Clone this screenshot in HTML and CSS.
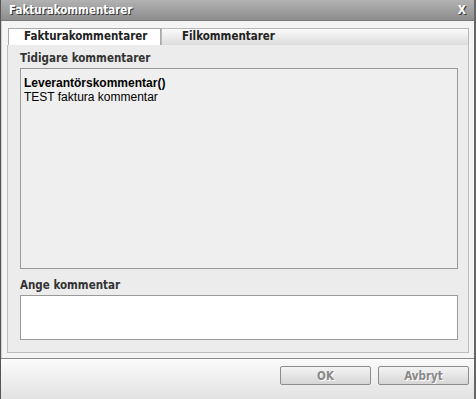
FILE: index.html
```html
<!DOCTYPE html>
<html lang="sv">
<head>
    <meta charset="UTF-8">
    <title>Fakturakommentarer</title>
    <link rel="stylesheet" href="styles.css">
</head>
<body>
    <div class="dialog">
        <div class="titlebar">
            <span class="title">Fakturakommentarer</span>
            <span class="close">X</span>
        </div>
        <div class="content">
            <div class="tabs">
                <div class="tab active">Fakturakommentarer</div>
                <div class="tab">Filkommentarer</div>
            </div>
            <div class="panel">
                <div class="label">Tidigare kommentarer</div>
                <div class="history">
                    <div class="author">Leverantörskommentar()</div>
                    <div class="text">TEST faktura kommentar</div>
                </div>
                <div class="label">Ange kommentar</div>
                <textarea class="input"></textarea>
            </div>
        </div>
        <div class="footer">
            <button class="btn">OK</button>
            <button class="btn">Avbryt</button>
        </div>
    </div>
</body>
</html>
```

FILE: styles.css
```css
* {
    margin: 0;
    padding: 0;
    box-sizing: border-box;
}

body {
    width: 476px;
    height: 399px;
    overflow: hidden;
    background-color: #f2f2f2;
    font-family: "DejaVu Sans Condensed", "DejaVu Sans", Verdana, sans-serif;
}

.dialog {
    width: 476px;
    height: 399px;
    display: flex;
    flex-direction: column;
    border-left: 1px solid #555;
    border-right: 2px solid #666;
}

.titlebar {
    height: 21px;
    background: linear-gradient(#b2b2b2, #8d8d8d);
    border-bottom: 1px solid #7a7a7a;
    display: flex;
    justify-content: space-between;
    align-items: center;
    padding: 0 8px 0 8px;
    color: #fff;
    font-weight: bold;
    font-size: 11.5px;
    text-shadow: 1px 1px 0 #333;
}

.close {
    font-size: 12px;
}

.content {
    background-color: #f4f4f4;
    padding: 7px 5px 5px 5px;
    border-left: 1px solid #cfcfcf;
}

.tabs {
    display: flex;
    padding-left: 1px;
    height: 17px;
}

.tab {
    font-size: 11.5px;
    font-weight: bold;
    color: #222;
    padding: 0 0 0 20px;
    line-height: 15px;
    border: 1px solid #b8b8b8;
    border-bottom: none;
    background: linear-gradient(#fbfbfb, #dcdcdc);
    flex: 1;
}

.tab.active {
    flex: 0 0 153px;
    padding-left: 15px;
    background: #fff;
    border-color: #aaa;
}

.panel {
    background-color: #ececec;
    border: 1px solid #bdbdbd;
    border-top: none;
    height: 308px;
    padding: 6px 10px 0 12px;
    display: flex;
    flex-direction: column;
}

.label {
    font-size: 11.5px;
    font-weight: bold;
    color: #333;
    height: 17px;
}

.history {
    height: 201px;
    background-color: #efefef;
    border: 1px solid #999;
    font-family: "Liberation Sans", Arial, sans-serif;
    font-size: 12px;
    color: #000;
    padding: 7px 3px;
    margin-bottom: 9px;
    line-height: 14px;
}

.author {
    font-weight: bold;
}

.input {
    height: 45px;
    border: 1px solid #999;
    background: #fff;
    resize: none;
}

.footer {
    flex: 1;
    border-top: 1px solid #8a8a8a;
    background: linear-gradient(#fbfbfb, #e2e2e2);
    display: flex;
    justify-content: flex-end;
    align-items: flex-start;
    gap: 7px;
    padding: 7px 5px 0 0;
}

.btn {
    width: 91px;
    height: 19px;
    border: 1px solid #8c8c8c;
    border-radius: 2px;
    background: linear-gradient(#f4f4f4, #d6d6d6);
    font-family: "DejaVu Sans Condensed", "DejaVu Sans", Verdana, sans-serif;
    font-size: 11.5px;
    font-weight: bold;
    color: #888;
    text-shadow: 1px 1px 0 #fff;
}
```
